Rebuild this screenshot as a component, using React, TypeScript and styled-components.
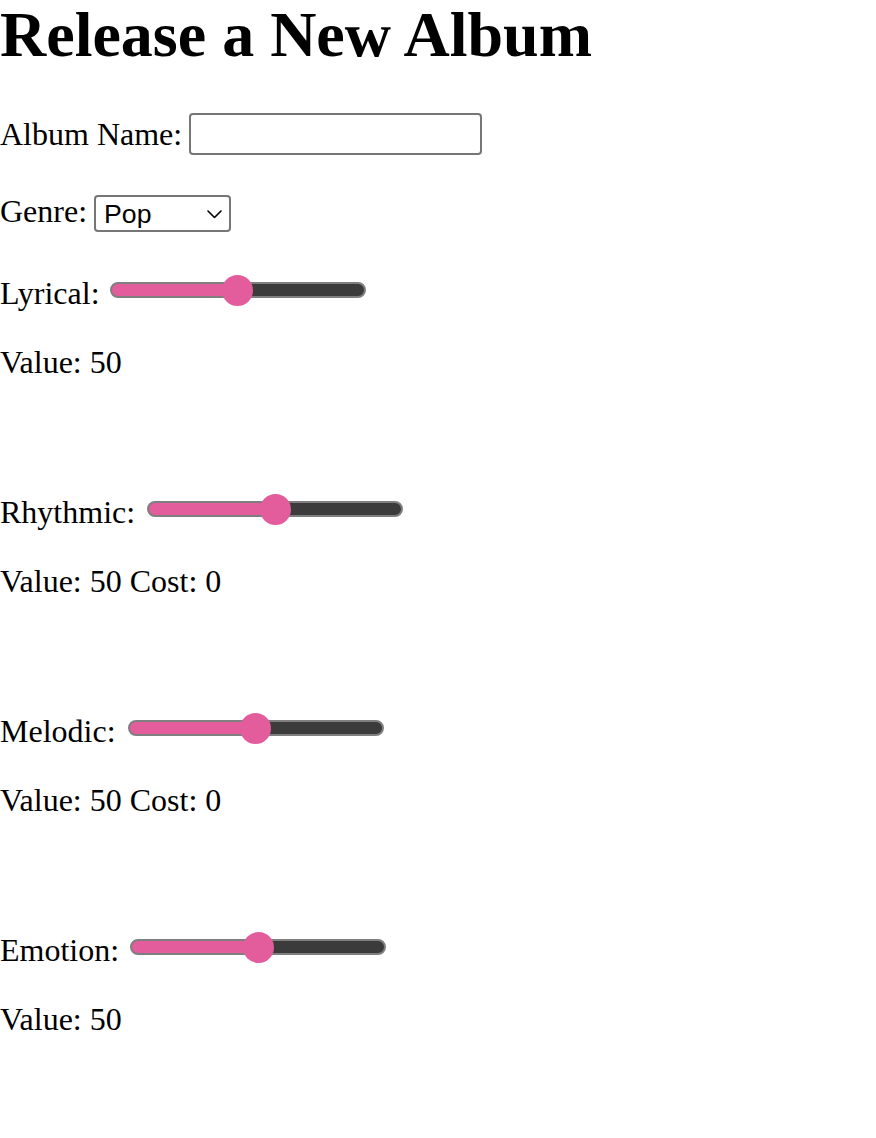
import React, { useState } from "react";
import styled, { createGlobalStyle } from "styled-components";

const GlobalStyle = createGlobalStyle`
  html, body {
    margin: 0;
    padding: 0;
    background: #ffffff;
  }
  body {
    font-family: "Liberation Serif", "Times New Roman", serif;
    color: #000000;
  }
`;

const PINK = "#e35c9b";

const Page = styled.div`
  display: flex;
  flex-direction: column;
  font-family: "Liberation Serif", "Times New Roman", serif;
  font-size: 32px;
`;

const Title = styled.h1`
  margin: -2px 0 0 0;
  font-size: 64px;
  font-weight: bold;
  line-height: normal;
`;

const Form = styled.form`
  display: flex;
  flex-direction: column;
  margin-top: 41px;
`;

const FieldRow = styled.div<{ $gap: number; $height: number; $top?: number }>`
  display: flex;
  align-items: center;
  gap: ${(p) => p.$gap}px;
  height: ${(p) => p.$height}px;
  margin-top: ${(p) => p.$top ?? 0}px;
`;

const Label = styled.label<{ $lift?: number }>`
  line-height: 37px;
  white-space: nowrap;
  margin-bottom: ${(p) => p.$lift ?? 0}px;
`;

const TextInput = styled.input`
  box-sizing: border-box;
  width: 293px;
  height: 42px;
  margin: 0;
  padding: 2px 6px;
  border: 2px solid #767676;
  border-radius: 4px;
  background: #ffffff;
  font-family: "Liberation Sans", Arial, sans-serif;
  font-size: 26.67px;
  outline: none;
`;

const SelectWrap = styled.div`
  position: relative;
  display: flex;
`;

const Select = styled.select`
  appearance: none;
  -webkit-appearance: none;
  box-sizing: border-box;
  width: 137px;
  height: 37px;
  margin: 0;
  padding: 0 30px 0 8px;
  border: 2px solid #767676;
  border-radius: 4px;
  background: #ffffff;
  color: #000000;
  font-family: "Liberation Sans", Arial, sans-serif;
  font-size: 26.67px;
  outline: none;
`;

const Chevron = styled.svg`
  position: absolute;
  right: 9px;
  top: 15px;
  pointer-events: none;
`;

const SliderGroup = styled.section<{ $top: number }>`
  display: flex;
  flex-direction: column;
  margin-top: ${(p) => p.$top}px;
`;

const Range = styled.input`
  -webkit-appearance: none;
  appearance: none;
  width: 256px;
  height: 32px;
  margin: 0 0 10px 0;
  padding: 0;
  background: transparent;
  outline: none;

  &::-webkit-slider-runnable-track {
    box-sizing: border-box;
    height: 16px;
    border: 2px solid #7f7f7f;
    border-radius: 8px;
    background: linear-gradient(
      to right,
      ${PINK} 0,
      ${PINK} var(--fill),
      #3b3b3b var(--fill),
      #3b3b3b 100%
    );
  }
  &::-webkit-slider-thumb {
    -webkit-appearance: none;
    appearance: none;
    width: 31px;
    height: 31px;
    margin-top: -9.5px;
    border: none;
    border-radius: 50%;
    background: ${PINK};
  }
  &::-moz-range-track {
    height: 12px;
    border: 2px solid #7f7f7f;
    border-radius: 8px;
    background: #3b3b3b;
  }
  &::-moz-range-progress {
    height: 12px;
    border-radius: 8px;
    background: ${PINK};
  }
  &::-moz-range-thumb {
    width: 31px;
    height: 31px;
    border: none;
    border-radius: 50%;
    background: ${PINK};
  }
`;

const ValueLine = styled.p`
  margin: 28px 0 0 0;
  line-height: 37px;
`;

type Attr = { name: string; showCost: boolean; gap: number };

const ATTRS: Attr[] = [
  { name: "Lyrical", showCost: false, gap: 10 },
  { name: "Rhythmic", showCost: true, gap: 12 },
  { name: "Melodic", showCost: true, gap: 12 },
  { name: "Emotion", showCost: false, gap: 11 },
];

function AttributeSlider({ attr, first }: { attr: Attr; first: boolean }) {
  const [value, setValue] = useState(50);
  const id = `attr-${attr.name.toLowerCase()}`;
  return (
    <SliderGroup $top={first ? 42 : 112}>
      <FieldRow $gap={attr.gap} $height={42}>
        <Label htmlFor={id} $lift={4}>
          {attr.name}:
        </Label>
        <Range
          id={id}
          type="range"
          min={0}
          max={100}
          value={value}
          onChange={(e) => setValue(Number(e.target.value))}
          style={{ ["--fill" as string]: `${value}%` } as React.CSSProperties}
        />
      </FieldRow>
      <ValueLine>
        Value: {value}
        {attr.showCost ? " Cost: 0" : ""}
      </ValueLine>
    </SliderGroup>
  );
}

export default function App() {
  const [name, setName] = useState("");
  const [genre, setGenre] = useState("Pop");
  return (
    <>
      <GlobalStyle />
      <Page>
        <Title>Release a New Album</Title>
        <Form onSubmit={(e) => e.preventDefault()}>
          <FieldRow $gap={7} $height={42}>
            <Label htmlFor="album-name">Album Name:</Label>
            <TextInput
              id="album-name"
              type="text"
              value={name}
              onChange={(e) => setName(e.target.value)}
            />
          </FieldRow>
          <FieldRow $gap={7} $height={37} $top={40}>
            <Label htmlFor="genre" $lift={4}>
              Genre:
            </Label>
            <SelectWrap>
              <Select
                id="genre"
                value={genre}
                onChange={(e) => setGenre(e.target.value)}
              >
                <option>Pop</option>
                <option>Rock</option>
                <option>Hip-Hop</option>
                <option>Jazz</option>
                <option>Country</option>
              </Select>
              <Chevron width="15" height="9" viewBox="0 0 15 9">
                <path
                  d="M1 1 L7.5 7.5 L14 1"
                  fill="none"
                  stroke="#000"
                  strokeWidth="1.6"
                  strokeLinecap="round"
                  strokeLinejoin="round"
                />
              </Chevron>
            </SelectWrap>
          </FieldRow>
          {ATTRS.map((a, i) => (
            <AttributeSlider key={a.name} attr={a} first={i === 0} />
          ))}
        </Form>
      </Page>
    </>
  );
}
